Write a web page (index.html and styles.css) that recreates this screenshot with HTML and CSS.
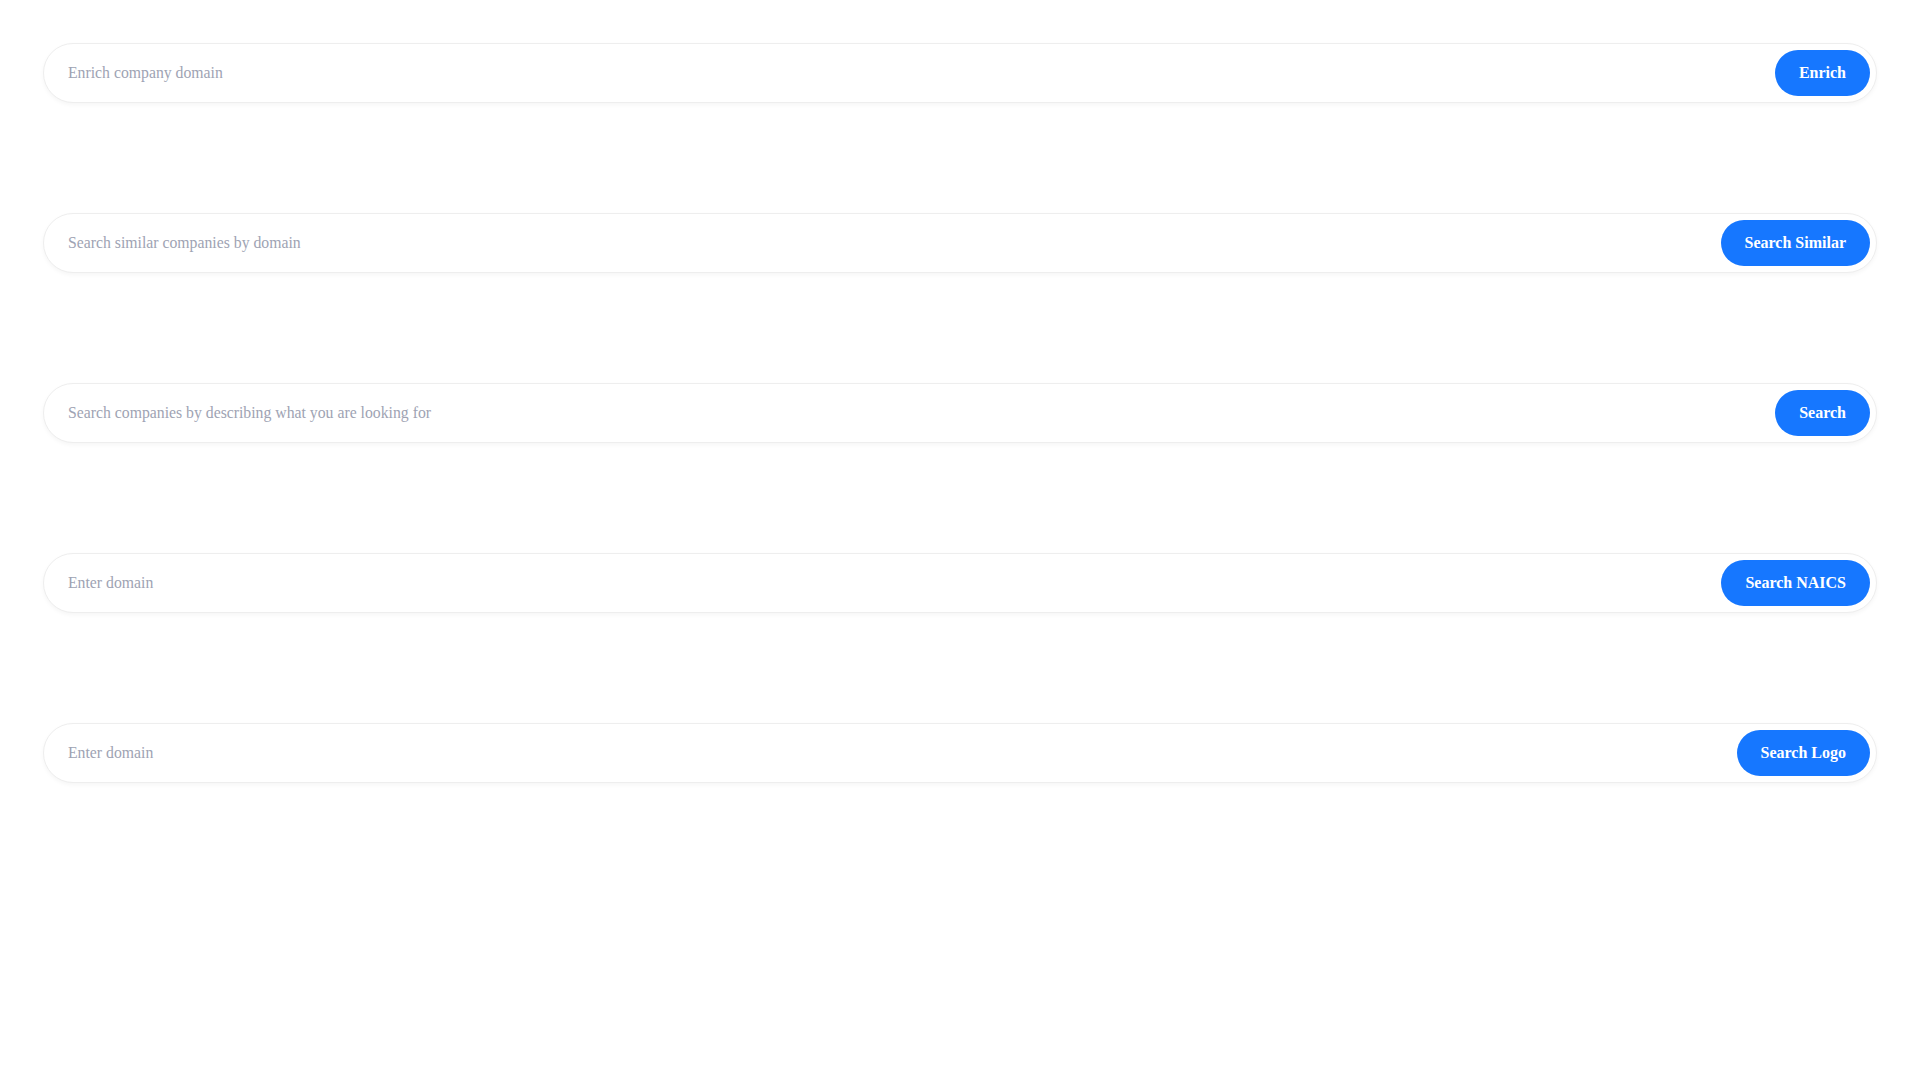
FILE: index.html
```html
<!DOCTYPE html>
<html lang="en">
<head>
    <meta charset="UTF-8">
    <meta name="viewport" content="width=device-width, initial-scale=1.0">
    <title>Company Tools</title>
    <link rel="stylesheet" href="styles.css">
</head>
<body>

    <div class="page">
        <!-- Enrichissement -->
        <form class="search-bar" onsubmit="return false">
            <input type="text" placeholder="Enrich company domain">
            <button type="submit">Enrich</button>
        </form>

        <!-- Sociétés similaires -->
        <form class="search-bar" onsubmit="return false">
            <input type="text" placeholder="Search similar companies by domain">
            <button type="submit">Search Similar</button>
        </form>

        <!-- Recherche libre -->
        <form class="search-bar" onsubmit="return false">
            <input type="text" placeholder="Search companies by describing what you are looking for">
            <button type="submit">Search</button>
        </form>

        <!-- NAICS -->
        <form class="search-bar" onsubmit="return false">
            <input type="text" placeholder="Enter domain">
            <button type="submit">Search NAICS</button>
        </form>

        <!-- Logo -->
        <form class="search-bar" onsubmit="return false">
            <input type="text" placeholder="Enter domain">
            <button type="submit">Search Logo</button>
        </form>
    </div>

</body>
</html>
```

FILE: styles.css
```css
/* Base */
* { margin: 0; padding: 0; box-sizing: border-box; }
body { background: #fff; font-family: "Liberation Serif", "Times New Roman", serif; }

/* Page */
.page { display: flex; flex-direction: column; gap: 110px; padding: 43px; }

/* Barres de recherche */
.search-bar { display: flex; align-items: center; height: 60px; padding: 6px; border: 1px solid #eeeeee; border-radius: 9999px; background: #fff; box-shadow: 0 2px 4px rgba(0, 0, 0, 0.04); }
.search-bar input { flex: 1; height: 100%; padding: 0 18px; border: none; outline: none; background: transparent; font-family: inherit; font-size: 15.75px; color: #333; }
.search-bar input::placeholder { color: #9ea3b3; }
.search-bar button { height: 46px; padding: 0 24px; border: none; border-radius: 9999px; background: #1677ff; color: #fff; font-family: inherit; font-size: 16px; font-weight: bold; cursor: pointer; }
```
